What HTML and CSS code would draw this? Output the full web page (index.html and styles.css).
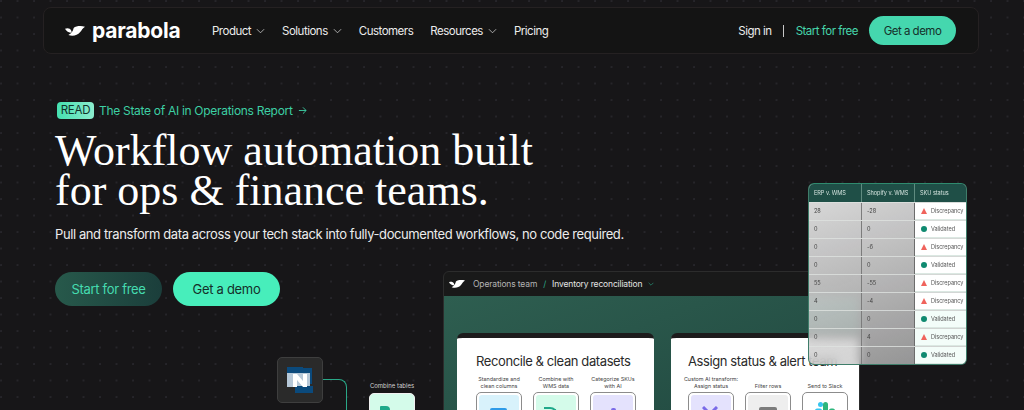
FILE: index.html
```html
<!DOCTYPE html>
<html lang="en">
<head>
<meta charset="utf-8">
<title>Parabola</title>
<link rel="stylesheet" href="styles.css">
</head>
<body>
<div class="page">
  <header class="nav">
    <a class="logo">
      <svg class="logo-mark" viewBox="0 0 60 30" width="20" height="10"><path d="M0 8c5-2 10-2 14 0 4 2 6 7 6 12C12 20 3 15 0 8z" fill="#fff"/><path d="M10 27c14 5 27 1 35-8 5-6 8-13 15-17C47-1 33 0 26 6c-2 8-5 16-16 21z" fill="#fff"/></svg>
      <span class="logo-text">parabola</span>
    </a>
    <nav class="nav-links">
      <span class="nav-item">Product<svg class="chev" viewBox="0 0 10 6"><path d="M1 1l4 4 4-4"/></svg></span>
      <span class="nav-item">Solutions<svg class="chev" viewBox="0 0 10 6"><path d="M1 1l4 4 4-4"/></svg></span>
      <span class="nav-item">Customers</span>
      <span class="nav-item">Resources<svg class="chev" viewBox="0 0 10 6"><path d="M1 1l4 4 4-4"/></svg></span>
      <span class="nav-item">Pricing</span>
    </nav>
    <div class="nav-actions">
      <span class="nav-item">Sign in</span>
      <span class="nav-sep"></span>
      <span class="nav-free">Start for free</span>
      <span class="nav-demo">Get a demo</span>
    </div>
  </header>

  <section class="hero">
    <div class="announce"><span class="read">READ</span><span class="announce-text">The State of AI in Operations Report</span><svg class="arrow" viewBox="0 0 10 10"><path d="M1 5h8M5.500 1.500L9 5 5.500 8.500"/></svg></div>
    <h1 class="title">Workflow automation built<br>for ops &amp; finance teams.</h1>
    <p class="lead">Pull and transform data across your tech stack into fully-documented workflows, no code required.</p>
    <div class="cta">
      <span class="btn btn-dark">Start for free</span>
      <span class="btn btn-light">Get a demo</span>
    </div>
  </section>

  <div class="netsuite">
    <svg viewBox="0 0 26 26" width="26" height="26"><rect x="0" y="0" width="16" height="6" fill="#0b4a7c"/><rect x="16" y="1" width="9" height="16" fill="#0b4a7c"/><rect x="0" y="6" width="23" height="14" fill="#b6c8d8"/><rect x="8" y="19" width="18" height="7" fill="#0b4a7c"/><rect x="16" y="2" width="7" height="4" fill="#0b4a7c"/><path d="M6 7h4l6 7V7h4v13h-4l-6-7v7H6z" fill="#fff"/></svg>
  </div>
  <div class="connector"></div>
  <div class="node-label">Combine tables</div>
  <div class="combine-tile"><span class="tile-icon"></span></div>

  <section class="app">
    <div class="app-bar">
      <svg class="app-logo" viewBox="0 0 60 30" width="16" height="8"><path d="M0 8c5-2 10-2 14 0 4 2 6 7 6 12C12 20 3 15 0 8z" fill="#fff"/><path d="M10 27c14 5 27 1 35-8 5-6 8-13 15-17C47-1 33 0 26 6c-2 8-5 16-16 21z" fill="#fff"/></svg>
      <span class="crumb">Operations team</span>
      <span class="crumb-sep">/</span>
      <span class="crumb-current">Inventory reconciliation</span>
      <svg class="crumb-chev" viewBox="0 0 10 6"><path d="M1 1l4 4 4-4"/></svg>
    </div>
    <div class="canvas">
      <article class="card card-a">
        <h2 class="card-title">Reconcile &amp; clean datasets</h2>
        <div class="steps">
          <div class="step"><div class="step-label"><span>Standardize and<br>clean columns</span></div><div class="tile"><div class="tile-in blue"><span class="shape-blue"></span></div></div></div>
          <div class="step"><div class="step-label"><span>Combine with<br>WMS data</span></div><div class="tile"><div class="tile-in green"><span class="shape-green"></span></div></div></div>
          <div class="step"><div class="step-label"><span>Categorize SKUs<br>with AI</span></div><div class="tile"><div class="tile-in purple"><span class="shape-purple"></span></div></div></div>
        </div>
      </article>
      <article class="card card-b">
        <h2 class="card-title">Assign status &amp; alert team</h2>
        <div class="steps">
          <div class="step"><div class="step-label"><span>Custom AI transform:<br>Assign status</span></div><div class="tile"><div class="tile-in purple"><svg class="tile-x" viewBox="0 0 16 10"><path d="M1 1l6 6M15 1L9 7M7 7l-3 3M9 7l3 3" fill="none" stroke="#7a6be8" stroke-width="3"/></svg></div></div></div>
          <div class="step"><div class="step-label"><span>Filter rows</span></div><div class="tile"><div class="tile-in grey"><span class="shape-grey"></span></div></div></div>
          <div class="step"><div class="step-label"><span>Send to Slack</span></div><div class="tile"><div class="tile-in white"><svg class="slack" viewBox="0 0 20 12"><rect x="8" y="0" width="5" height="12" rx="2.500" fill="#2eb67d"/><circle cx="5.500" cy="2.500" r="2.500" fill="#36c5f0"/><rect x="0" y="6.500" width="7" height="4" rx="2" fill="#36c5f0"/><rect x="14" y="6.500" width="6" height="4" rx="2" fill="#2eb67d"/></svg></div></div></div>
        </div>
      </article>
    </div>
  </section>

  <aside class="table-float">
    <div class="row head"><span class="c1">ERP v. WMS</span><span class="c2">Shopify v. WMS</span><span class="c3">SKU status</span></div>
    <div class="row"><span class="c1">28</span><span class="c2">-28</span><span class="c3"><i class="warn"></i>Discrepancy</span></div>
    <div class="row"><span class="c1">0</span><span class="c2">0</span><span class="c3"><i class="ok"></i>Validated</span></div>
    <div class="row"><span class="c1">0</span><span class="c2">-6</span><span class="c3"><i class="warn"></i>Discrepancy</span></div>
    <div class="row"><span class="c1">0</span><span class="c2">0</span><span class="c3"><i class="ok"></i>Validated</span></div>
    <div class="row"><span class="c1">55</span><span class="c2">-55</span><span class="c3"><i class="warn"></i>Discrepancy</span></div>
    <div class="row"><span class="c1">4</span><span class="c2">-4</span><span class="c3"><i class="warn"></i>Discrepancy</span></div>
    <div class="row"><span class="c1">0</span><span class="c2">0</span><span class="c3"><i class="ok"></i>Validated</span></div>
    <div class="row"><span class="c1">0</span><span class="c2">4</span><span class="c3"><i class="warn"></i>Discrepancy</span></div>
    <div class="row"><span class="c1">0</span><span class="c2">0</span><span class="c3"><i class="ok"></i>Validated</span></div>
  </aside>
</div>
</body>
</html>
```
FILE: styles.css
```css
* { box-sizing: border-box; }
html, body { margin: 0; height: 100%; }
body {
  width: 1024px; height: 410px; overflow: hidden;
  background-color: #171618;
  font-family: "Inter", "Liberation Sans", sans-serif;
  color: #fff;
}
.page {
  position: relative; width: 1024px; height: 410px; overflow: hidden;
  padding: 7px 45px 0 43px;
  background-image: radial-gradient(circle at 1px 1px, #2a292e 0.6px, transparent 1px);
  background-size: 16.500px 16.500px;
}
.nav {
  display: flex; align-items: center; height: 47px;
  padding: 0 22px 0 21px;
  background: #141414; border: 1px solid #252122; border-radius: 8px;
  font-size: 11.500px; letter-spacing: -0.5px;
}
.logo { display: flex; align-items: center; width: 147px; gap: 7px; flex: none; }
.logo-mark { flex: none; margin-top: 1px; }
.logo-text { font-weight: 700; font-size: 21px; letter-spacing: -0.2px; line-height: 24px; }
.nav-links { display: flex; gap: 17px; }
.nav-item { display: flex; align-items: center; gap: 5px; color: #ececec; white-space: nowrap; }
.chev { width: 9px; height: 6px; fill: none; stroke: #c8c8c8; stroke-width: 0.9; }
.nav-actions { display: flex; align-items: center; margin-left: auto; }
.nav-sep { width: 1px; height: 12px; background: #c8c8c8; margin: 0 12px 0 11px; }
.nav-free { color: #46d6ac; margin-right: 11px; white-space: nowrap; }
.nav-demo {
  display: flex; align-items: center; justify-content: center;
  width: 87px; height: 29px; border-radius: 15px;
  background: #45d7ae; color: #15302a; white-space: nowrap;
}
.hero { padding: 48px 0 0 12px; }
.announce { display: flex; align-items: center; height: 17px; font-size: 12px; letter-spacing: -0.3px; color: #3dcfa4; }
.read {
  width: 37px; height: 17px; margin: 0 5px 0 2px; border-radius: 4px;
  background: linear-gradient(90deg, #45e0b0, #8ceccd);
  color: #11332b; font-size: 11.500px; line-height: 17px; text-align: center; letter-spacing: -0.2px;
}
.announce-text { white-space: nowrap; }
.arrow { width: 9px; height: 9px; margin-left: 5px; fill: none; stroke: #3dcfa4; stroke-width: 1; }
.title {
  margin: 12px 0 0; padding: 0;
  font-family: "Liberation Serif", serif; font-weight: 400;
  font-size: 44px; line-height: 40px; color: #fff;
}
.lead { margin: 14px 0 0; font-size: 13px; letter-spacing: -0.4px; line-height: 18px; color: #ececec; white-space: nowrap; }
.cta { display: flex; gap: 11px; margin-top: 29px; }
.btn {
  display: flex; align-items: center; justify-content: center;
  width: 107px; height: 34px; border-radius: 17px; font-size: 13px; letter-spacing: -0.3px;
}
.btn-dark { background: linear-gradient(90deg, #27594b, #1b3e3b); color: #45dcb0; }
.btn-light { background: #47eebb; color: #15302a; }

.netsuite {
  position: absolute; left: 277px; top: 357px; width: 46px; height: 46px;
  display: flex; align-items: center; justify-content: center;
  background: #2a2a2a; border: 1px solid #3e3e3e; border-radius: 5px;
}
.connector {
  position: absolute; left: 323px; top: 379px; width: 24px; height: 40px;
  border-top: 1.500px solid #2aa888; border-right: 1.500px solid #2aa888; border-top-right-radius: 8px;
}
.node-label { position: absolute; left: 352px; top: 382px; width: 80px; text-align: center; font-size: 6px; color: #d0d0d0; }
.combine-tile {
  position: absolute; left: 369px; top: 393px; width: 46px; height: 46px;
  background: #d4fbea; border: 1px solid #f0f0f0; border-radius: 5px;
}
.tile-icon { position: absolute; left: 10px; top: 12px; width: 10px; height: 6px; background: #1fa98a; border-radius: 1px 4px 0 0; }

.app {
  position: absolute; left: 443px; top: 271px; width: 417px; height: 160px;
  border: 1px solid #2c2c2c; border-radius: 6px 6px 0 0; overflow: hidden; background: #191919;
}
.app-bar { display: flex; align-items: center; height: 24px; padding: 0 0 0 5px; font-size: 8.500px; letter-spacing: -0.15px; white-space: nowrap; }
.app-logo { margin-right: 8px; }
.crumb { color: #b4b4b4; }
.crumb-sep { color: #2aa888; margin: 0 6px; }
.crumb-current { color: #e4e4e4; }
.crumb-chev { width: 6px; height: 4px; margin-left: 6px; fill: none; stroke: #2aa888; stroke-width: 1; }
.canvas {
  display: flex; gap: 17px; height: 136px; padding: 37px 0 0 13px;
  background: linear-gradient(160deg, #2e5e50, #244e44 70%, #1e4a40);
}
.card {
  flex: none; height: 120px; background: #fff; color: #222;
  border-top: 5px solid #1d1b1c; border-radius: 6px 6px 0 0;
  padding-top: 14px;
}
.card-a { width: 197px; padding-left: 19px; }
.card-b { width: 189px; padding-left: 17px; }
.card-title { margin: 0; font-weight: 400; font-size: 13px; letter-spacing: -0.4px; line-height: 18px; white-space: nowrap; color: #2a2a2a; }
.steps { display: flex; gap: 11px; margin-top: 5px; }
.step { width: 46px; display: flex; flex-direction: column; align-items: center; flex: none; }
.step-label {
  display: flex; align-items: flex-end; justify-content: center; flex: none;
  width: 46px; height: 15px;
  font-size: 5.400px; line-height: 7px; text-align: center; color: #444; white-space: nowrap;
}
.tile { width: 46px; height: 46px; margin-top: 2px; padding: 2px; border: 1px solid #8c8c8c; border-radius: 5px; background: #fff; }
.tile-in { position: relative; height: 100%; border-radius: 3px; }
.blue { background: #d8f2fb; } .green { background: #d4fbea; } .purple { background: #e4e2fd; } .grey { background: #eeeeee; } .white { background: #fff; }
.shape-blue { position: absolute; left: 11px; top: 13px; width: 17px; height: 10px; background: #2f9be8; border-radius: 2px 2px 0 0; }
.shape-green { position: absolute; left: 8px; top: 12px; width: 14px; height: 14px; border: 2px solid #1fa98a; border-width: 2px 2px 0 0; border-top-right-radius: 8px; }
.shape-purple { position: absolute; left: 18px; top: 13px; width: 5px; height: 10px; background: #7a6be8; border-radius: 2px 2px 0 0; }
.shape-grey { position: absolute; left: 11px; top: 12px; width: 18px; height: 10px; background: #7c7c7c; border-radius: 2px 2px 0 0; }
.tile-x { position: absolute; left: 11px; top: 11px; width: 16px; height: 10px; }
.slack { position: absolute; left: 10px; top: 7px; width: 20px; height: 12px; }

.table-float {
  position: absolute; left: 808px; top: 183px; width: 159px; height: 182px;
  display: flex; flex-direction: column; overflow: hidden;
  border: 1px solid #3f7d6a; border-top-color: #2f8a6e; border-radius: 6px;
  font-size: 5.600px; letter-spacing: -0.05px; color: #444;
  background: linear-gradient(160deg, rgba(238,238,238,.92), rgba(215,215,215,.85) 45%, rgba(190,190,190,.72));
  backdrop-filter: blur(5px);
}
.row { display: grid; grid-template-columns: 53px 53px 1fr; height: 18.200px; align-items: stretch; border-top: 1px solid rgba(222,226,224,.8); }
.row span { display: flex; align-items: center; padding-left: 5px; gap: 4px; white-space: nowrap; }
.row .c1 { border-right: 1px solid #7c7c7c; }
.row .c2 { border-right: 1px solid #6c6c6c; }
.row .c3 { background: #fff; padding-left: 5px; color: #555; box-shadow: inset 0 -1px 0 #dbe8e2; }
.row:nth-child(n+8) .c3 { background: #f3fdf9; }
.row.head { height: 18px; border-top: 0; background: #1f4f47; color: #d5e4df; }
.row.head .c1, .row.head .c2 { border-right-color: #5f8b80; }
.row.head .c3 { background: #1f4f47; color: #d5e4df; box-shadow: none; }
.warn { width: 0; height: 0; border-left: 3px solid transparent; border-right: 3px solid transparent; border-bottom: 6px solid #f0635c; margin-left: 1px; }
.ok { width: 6px; height: 6px; margin-left: 1px; border-radius: 50%; background: #0f8a70; }
```
